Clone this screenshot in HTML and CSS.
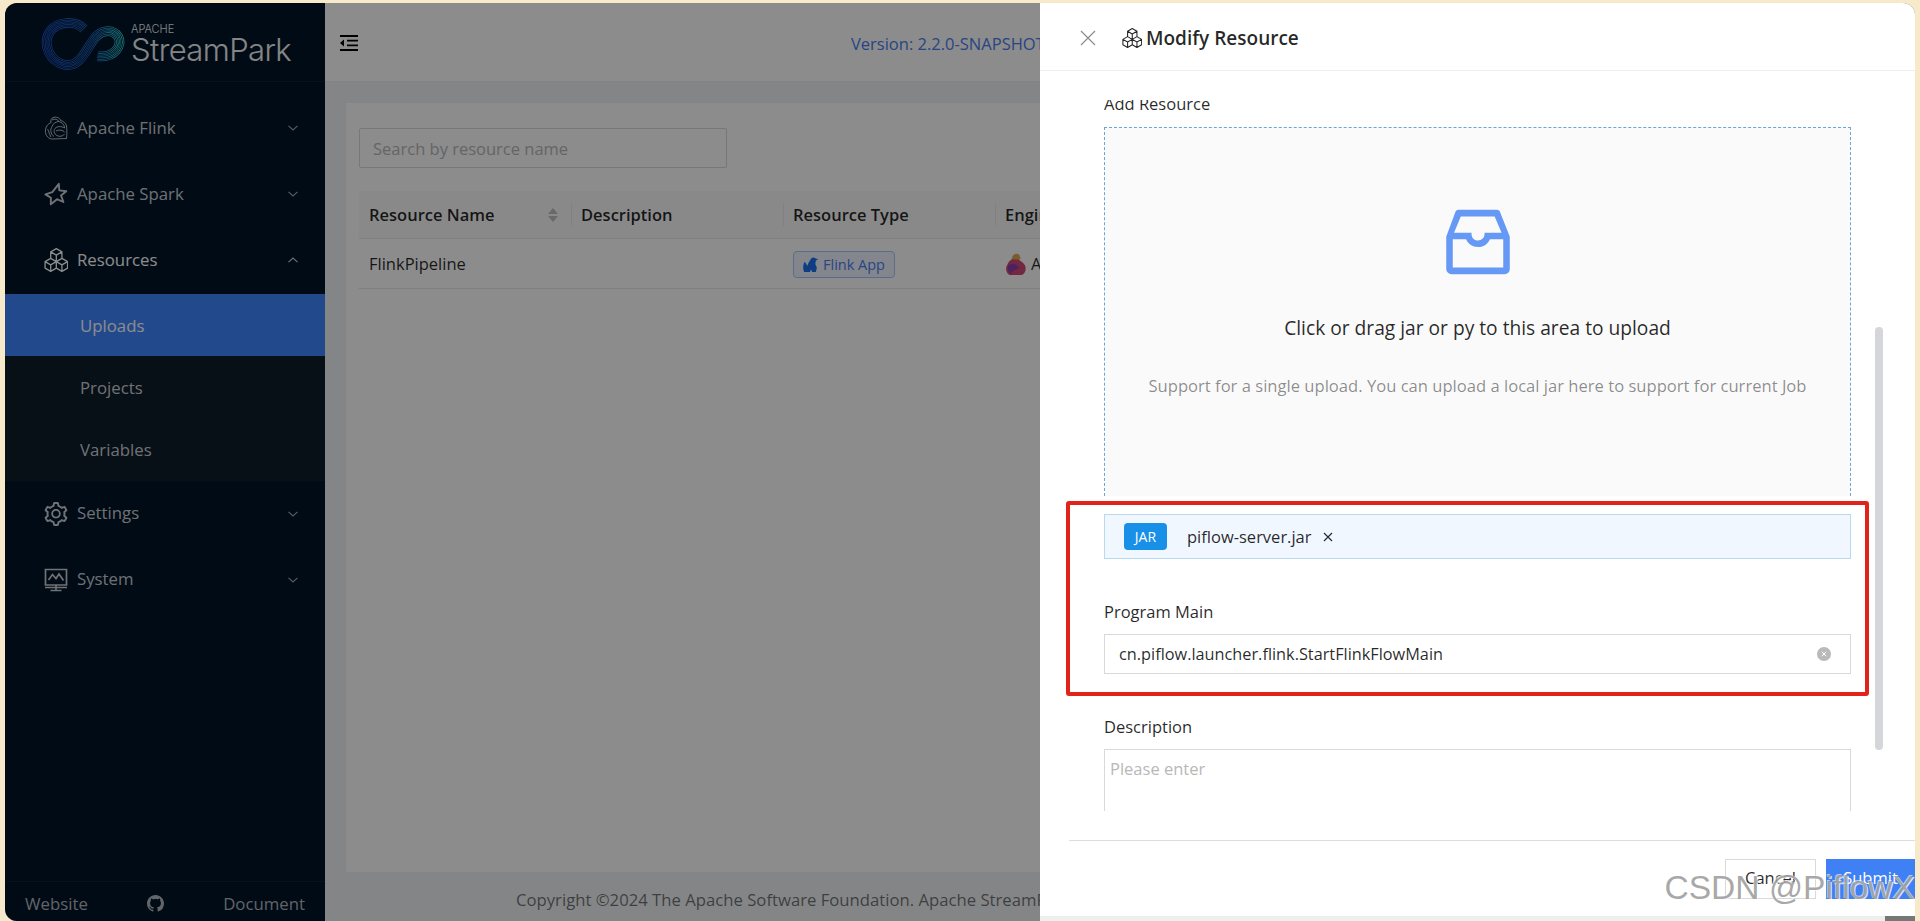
FILE: index.html
```html
<!DOCTYPE html>
<html lang="en">
<head>
    <meta charset="UTF-8">
    <title>StreamPark - Uploads</title>
    <link rel="stylesheet" href="styles.css">
</head>
<body>
    <svg class="defs" width="0" height="0">
        <defs>
            <symbol id="cubes" viewBox="2.5 1 18.5 18.5">
                <path d="M12 1.5L16.33 4V9L12 11.5L7.67 9V4ZM7.67 4L12 6.5L16.33 4M12 6.5V11.5M7.67 9L12 11.5V16.5L7.67 19L3.33 16.5V11.5ZM3.33 11.5L7.67 14L12 11.5M7.67 14V19M16.33 9L20.67 11.5V16.5L16.33 19L12 16.5V11.5ZM12 11.5L16.33 14L20.67 11.5M16.33 14V19" fill="none" stroke="currentColor" stroke-width="1" stroke-linejoin="round"/>
            </symbol>
            <symbol id="chevron" viewBox="0 0 12 8">
                <path d="M1.5 1.8L6 6L10.5 1.8" fill="none" stroke="currentColor" stroke-width="1.1"/>
            </symbol>
            <linearGradient id="logo-grad" x1="0" y1="0" x2="1" y2="0">
                <stop offset="0" stop-color="#2058d0"/>
                <stop offset="0.6" stop-color="#2168c8"/>
                <stop offset="1" stop-color="#35d0dc"/>
            </linearGradient>
            <path id="logo-line" d="M41 8C33 0 14-1 6 11C-2 24 6 42 22 45C36 47 42 32 50 20C57 9 70 7 76 16C81 25 72 38 55 36" fill="none"/>
        </defs>
    </svg>

    <div class="window">
        <aside class="sidebar">
            <div class="logo">
                <svg class="logo-mark" viewBox="-3 -3 86 54">
                    <use href="#logo-line" stroke="url(#logo-grad)" stroke-width="10"/>
                    <use href="#logo-line" stroke="#001529" stroke-width="8.400"/>
                    <use href="#logo-line" stroke="url(#logo-grad)" stroke-width="6.800"/>
                    <use href="#logo-line" stroke="#001529" stroke-width="5.200"/>
                    <use href="#logo-line" stroke="url(#logo-grad)" stroke-width="3.600"/>
                    <use href="#logo-line" stroke="#001529" stroke-width="2"/>
                    <use href="#logo-line" stroke="url(#logo-grad)" stroke-width="0.800"/>
                </svg>
                <div class="logo-text">
                    <span class="logo-apache">APACHE</span>
                    <span class="logo-name">StreamPark</span>
                </div>
            </div>

            <nav class="menu">
                <a class="menu-item">
                    <svg class="menu-icon" viewBox="0 0 24 24" fill="none" stroke="currentColor" stroke-width="0.9" stroke-linejoin="round">
                        <path d="M9 1.5C12 .5 16 1.5 16.5 4.5C19 5 22 7 22.5 10C23 14 23 19 22.5 22.5L8 23C3 22.5 1 18 1.5 13.5C2 10 4.5 7.5 7 6.5C6.5 4.5 7 2.5 9 1.5Z"/>
                        <path d="M8 4C10.500 2.500 14 3 14.500 5.500C11.500 6 9 7.500 8 10.500C6 13.500 6.500 18 10 20.500M14.500 5.500C18 6 20.500 9 20.500 12C17.500 10 13 10 11 12.500C9 15 10.500 19 14 20M3.500 13C5 15 5 18 7 21M12 15C15 13.500 19 14 21 16.500M14 20C17 21 19.500 19.500 20.500 18"/>
                    </svg>
                    <span>Apache Flink</span>
                    <svg class="menu-arrow"><use href="#chevron"/></svg>
                </a>
                <a class="menu-item">
                    <svg class="menu-icon" viewBox="0 0 24 24" fill="none" stroke="currentColor" stroke-width="1.9" stroke-linejoin="round">
                        <path d="M14.800 1.800L15.300 8.400L22.300 9.200L17 13.400L19.400 20L13 17.200L6.800 22.300L6.900 15.700L1.400 12.400L8.300 10.200Z"/>
                    </svg>
                    <span>Apache Spark</span>
                    <svg class="menu-arrow"><use href="#chevron"/></svg>
                </a>
                <a class="menu-item menu-open">
                    <svg class="menu-icon"><use href="#cubes"/></svg>
                    <span>Resources</span>
                    <svg class="menu-arrow arrow-up"><use href="#chevron"/></svg>
                </a>
                <div class="submenu">
                    <a class="submenu-item active">Uploads</a>
                    <a class="submenu-item">Projects</a>
                    <a class="submenu-item">Variables</a>
                </div>
                <a class="menu-item">
                    <svg class="menu-icon" viewBox="64 64 896 896" fill="currentColor">
                        <path d="M924.8 625.7l-65.5-56c3.1-19 4.7-38.4 4.7-57.8s-1.6-38.8-4.7-57.8l65.5-56a32.03 32.03 0 0 0 9.3-35.2l-.9-2.6a443.74 443.74 0 0 0-79.7-137.9l-1.8-2.1a32.12 32.12 0 0 0-35.1-9.5l-81.3 28.9c-30-24.6-63.5-44-99.7-57.6l-15.7-85a32.05 32.05 0 0 0-25.8-25.7l-2.7-.5c-52.1-9.4-106.9-9.4-159 0l-2.7.5a32.05 32.05 0 0 0-25.8 25.7l-15.8 85.4a351.86 351.86 0 0 0-99 57.4l-81.9-29.1a32 32 0 0 0-35.1 9.5l-1.8 2.1a446.02 446.02 0 0 0-79.7 137.9l-.9 2.6c-4.5 12.5-.8 26.5 9.3 35.2l66.3 56.6c-3.1 18.8-4.6 38-4.6 57.1 0 19.2 1.5 38.4 4.6 57.1L99 625.5a32.03 32.03 0 0 0-9.3 35.2l.9 2.6c18.1 50.4 44.9 96.9 79.7 137.9l1.8 2.1a32.12 32.12 0 0 0 35.1 9.5l81.9-29.1c29.8 24.5 63.1 43.9 99 57.4l15.8 85.4a32.05 32.05 0 0 0 25.8 25.7l2.7.5a449.4 449.4 0 0 0 159 0l2.7-.5a32.05 32.05 0 0 0 25.8-25.7l15.7-85a350 350 0 0 0 99.7-57.6l81.3 28.9a32 32 0 0 0 35.1-9.5l1.8-2.1c34.8-41.1 61.6-87.5 79.7-137.9l.9-2.6c4.5-12.3.8-26.3-9.3-35zM788.3 465.9c2.5 15.1 3.8 30.6 3.8 46.1s-1.3 31-3.8 46.1l-6.6 40.1 74.7 63.9a370.03 370.03 0 0 1-42.6 73.6L721 702.8l-31.4 25.8c-23.9 19.6-50.5 35-79.3 45.8l-38.1 14.3-17.9 97a377.5 377.5 0 0 1-85 0l-17.9-97.2-37.8-14.5c-28.5-10.8-55-26.2-78.7-45.7l-31.4-25.9-93.4 33.2c-17-22.9-31.2-47.6-42.6-73.6l75.5-64.5-6.5-40c-2.4-14.9-3.7-30.3-3.7-45.5 0-15.3 1.2-30.6 3.7-45.5l6.5-40-75.5-64.5c11.3-26.1 25.6-50.7 42.6-73.6l93.4 33.2 31.4-25.9c23.7-19.5 50.2-34.9 78.7-45.7l37.9-14.3 17.9-97.2c28.1-3.2 56.8-3.2 85 0l17.9 97 38.1 14.3c28.7 10.8 55.4 26.2 79.3 45.8l31.4 25.8 92.8-32.9c17 22.9 31.2 47.6 42.6 73.6L781.8 426l6.5 39.9zM512 326c-97.2 0-176 78.8-176 176s78.8 176 176 176 176-78.8 176-176-78.8-176-176-176zm79.2 255.2A111.6 111.6 0 0 1 512 614c-29.9 0-58-11.7-79.2-32.8A111.6 111.6 0 0 1 400 502c0-29.9 11.7-58 32.8-79.2C454 401.6 482.1 390 512 390c29.9 0 58 11.6 79.2 32.8A111.6 111.6 0 0 1 624 502c0 29.9-11.7 58-32.8 79.2z"/>
                    </svg>
                    <span>Settings</span>
                    <svg class="menu-arrow"><use href="#chevron"/></svg>
                </a>
                <a class="menu-item">
                    <svg class="menu-icon" viewBox="0 0 24 24" fill="none" stroke="currentColor" stroke-width="1.7">
                        <path d="M1.500 1.500H22.500V17H1.500ZM4.500 12L8.500 6.500L12 10.500L15 6L19.500 12.500M1 19.500H23M12 17V22.500M6.500 22.500H17.500"/>
                    </svg>
                    <span>System</span>
                    <svg class="menu-arrow"><use href="#chevron"/></svg>
                </a>
            </nav>

            <div class="sidebar-footer">
                <a>Website</a>
                <svg class="github" viewBox="0 0 16 16" fill="currentColor">
                    <path d="M8 0C3.58 0 0 3.58 0 8c0 3.54 2.29 6.53 5.47 7.59.4.07.55-.17.55-.38 0-.19-.01-.82-.01-1.49-2.01.37-2.53-.49-2.69-.94-.09-.23-.48-.94-.82-1.13-.28-.15-.68-.52-.01-.53.63-.01 1.08.58 1.23.82.72 1.21 1.87.87 2.33.66.07-.52.28-.87.51-1.07-1.78-.2-3.64-.89-3.64-3.95 0-.87.31-1.59.82-2.15-.08-.2-.36-1.02.08-2.12 0 0 .67-.21 2.2.82.64-.18 1.32-.27 2-.27.68 0 1.36.09 2 .27 1.53-1.04 2.2-.82 2.2-.82.44 1.1.16 1.92.08 2.12.51.56.82 1.27.82 2.15 0 3.07-1.87 3.75-3.65 3.95.29.25.54.73.54 1.48 0 1.07-.01 1.93-.01 2.2 0 .21.15.46.55.38A8.013 8.013 0 0016 8c0-4.42-3.58-8-8-8z"/>
                </svg>
                <a>Document</a>
            </div>
        </aside>

        <div class="main">
            <header class="topbar">
                <svg class="collapse" viewBox="0 0 18 16" fill="currentColor">
                    <path d="M0 0H18V2H0ZM0 14H18V16H0ZM7 4.700H18V6.500H7ZM7 9.500H18V11.300H7ZM4 4.500V11.500L0 8Z"/>
                </svg>
                <a class="version">Version: 2.2.0-SNAPSHOT</a>
            </header>

            <section class="content">
                <div class="card">
                    <input class="search" type="text" placeholder="Search by resource name">
                    <div class="table">
                        <div class="table-row table-head">
                            <div class="cell">
                                Resource Name
                                <span class="sorter"><i class="caret-up"></i><i class="caret-down"></i></span>
                            </div>
                            <div class="cell">Description</div>
                            <div class="cell">Resource Type</div>
                            <div class="cell">Engine Type</div>
                        </div>
                        <div class="table-row">
                            <div class="cell">FlinkPipeline</div>
                            <div class="cell"></div>
                            <div class="cell">
                                <span class="tag">
                                    <svg class="tag-icon" viewBox="0 0 16 16" fill="currentColor">
                                        <path d="M2 15C.5 12 1 8 2.500 5.500C3.500 7 4.500 8 5 9.500C5.500 7 7 5 8 3.500C8.500 2 10 1 11 1.500L12.500 2L15 3L13 4.500L12.500 7.500L14 11L13 15H9.500L8.500 12.500L7.500 15Z"/>
                                    </svg>
                                    Flink App
                                </span>
                            </div>
                            <div class="cell engine">
                                <svg class="engine-icon" viewBox="0 0 20 20">
                                    <path d="M9 1C12 0 14 2 14 5L12 8L6 7C6 4 7 2 9 1Z" fill="#e0a85a"/>
                                    <path d="M6 6C9 5 15 6 18 11C20 15 18 19 15 20H4C1 18 0 14 2 11C3 9 4 7 6 6Z" fill="#d14a78"/>
                                    <path d="M3 11C7 9 11 10 13 14C10 15 7 16 5 19C3 17 2 14 3 11Z" fill="#8a3fa8"/>
                                </svg>
                                Apache Flink
                            </div>
                        </div>
                    </div>
                </div>
            </section>

            <footer class="copyright">Copyright ©2024 The Apache Software Foundation. Apache StreamPark, StreamPark, and its feather logo are trademarks of The Apache Software Foundation.</footer>
        </div>

        <div class="mask"></div>

        <div class="drawer">
            <div class="drawer-header">
                <svg class="drawer-close" viewBox="0 0 16 16" fill="none" stroke="currentColor" stroke-width="1.200">
                    <path d="M1 1L15 15M15 1L1 15"/>
                </svg>
                <svg class="title-icon"><use href="#cubes"/></svg>
                <span class="drawer-title">Modify Resource</span>
            </div>

            <div class="drawer-body">
                <form class="form">
                    <label class="form-label">Add Resource</label>
                    <div class="dragger">
                        <svg class="inbox" viewBox="64 64 896 896" fill="currentColor">
                            <path d="M885.2 446.3l-.2-.8-112.2-285.1c-5-16.1-19.9-27.2-36.8-27.2H281.2c-17 0-32.1 11.3-36.9 27.6L139.4 443l-.3.7-.2.8c-1.3 4.9-1.7 9.9-1 14.8-.1 1.6-.2 3.2-.2 4.8V830a60.9 60.9 0 0 0 60.8 60.8h627.2c33.5 0 60.8-27.3 60.9-60.8V464.1c0-1.3 0-2.6-.1-3.7.4-4.9 0-9.6-1.3-14.1zm-295.8-43l-.3 15.7c-.8 44.9-31.8 75.1-77.1 75.1-22.1 0-41.1-7.1-54.8-20.6S436 441.2 435.6 419l-.3-15.7H229.5L309 210h399.2l81.7 193.3H589.4zm-375 76.8h157.3c24.3 57.1 76 90.8 140.4 90.8 33.7 0 65-9.4 90.3-27.2 22.2-15.6 39.5-37.4 50.7-63.6h156.5V814H214.4V480.1z"/>
                        </svg>
                        <p class="dragger-text">Click or drag jar or py to this area to upload</p>
                        <p class="dragger-hint">Support for a single upload. You can upload a local jar here to support for current Job</p>
                    </div>

                    <div class="file-row">
                        <span class="file-badge">JAR</span>
                        <span class="file-name">piflow-server.jar</span>
                        <svg class="file-remove" viewBox="0 0 10 10" fill="none" stroke="currentColor" stroke-width="1.100">
                            <path d="M1 1L9 9M9 1L1 9"/>
                        </svg>
                    </div>

                    <label class="form-label label-main">Program Main</label>
                    <div class="input-wrap">
                        <input class="form-input" type="text" value="cn.piflow.launcher.flink.StartFlinkFlowMain">
                        <svg class="clear" viewBox="0 0 14 14">
                            <circle cx="7" cy="7" r="7" fill="#b9b9b9"/>
                            <path d="M4.800 4.800L9.200 9.200M9.200 4.800L4.800 9.200" stroke="#fff" stroke-width="1"/>
                        </svg>
                    </div>

                    <label class="form-label label-desc">Description</label>
                    <textarea class="form-textarea" placeholder="Please enter"></textarea>
                </form>
                <div class="scroll-thumb"></div>
            </div>

            <div class="drawer-footer">
                <button class="btn" type="button">Cancel</button>
                <button class="btn btn-primary" type="button">Submit</button>
            </div>
        </div>

        <div class="annotation"></div>
    </div>

    <div class="bottom-strip"></div>
    <div class="watermark">CSDN @PiflowX</div>
</body>
</html>
```
FILE: styles.css
```css
* {
    box-sizing: border-box;
}

html, body {
    height: 100%;
}

body {
    margin: 0;
    padding: 3px 5px 0;
    overflow: hidden;
    position: relative;
    background: #f6eaca;
    color: rgba(0, 0, 0, 0.85);
    font-family: "Open Sans", "Noto Sans", sans-serif;
    font-size: 16.5px;
}

.defs {
    position: absolute;
}

.window {
    position: relative;
    display: flex;
    height: 918px;
    overflow: hidden;
    border-radius: 12px 12px 0 12px;
}

/* sidebar */
.sidebar {
    display: flex;
    flex-direction: column;
    flex: none;
    width: 320px;
    background: #001529;
    color: rgba(255, 255, 255, 0.8);
    font-size: 16.8px;
}

.logo {
    display: flex;
    align-items: center;
    flex: none;
    height: 79px;
    padding: 0 0 0 36px;
    border-bottom: 1px solid #0b2236;
}

.logo-mark {
    width: 84px;
    height: 53px;
    margin-top: 4px;
}

.logo-text {
    display: flex;
    flex-direction: column;
    margin: 3px 0 0 6px;
    color: #fff;
    font-family: "Inter", sans-serif;
    font-weight: 300;
    opacity: 0.95;
}

.logo-apache {
    font-size: 11px;
    line-height: 12px;
}

.logo-name {
    font-size: 31px;
    line-height: 30px;
    letter-spacing: -0.6px;
}

.menu {
    padding-top: 13px;
}

.menu-item {
    display: flex;
    align-items: center;
    height: 66px;
    padding: 0 26px 0 39px;
}

.menu-item span {
    flex: 1;
    margin-left: 9px;
    padding-bottom: 2px;
}

.menu-open {
    color: #fff;
}

.menu-icon {
    width: 24px;
    height: 24px;
    flex: none;
}

.menu-arrow {
    width: 12px;
    height: 8px;
    flex: none;
    opacity: 0.8;
}

.arrow-up {
    transform: rotate(180deg);
}

.submenu {
    margin-top: 1px;
    background: #0d1c2b;
}

.submenu-item {
    display: flex;
    align-items: center;
    height: 62.33px;
    padding-left: 75px;
}

.submenu-item.active {
    background: #3f86ff;
    color: #fff;
}

.sidebar-footer {
    display: flex;
    align-items: center;
    justify-content: space-between;
    flex: none;
    margin-top: auto;
    height: 40px;
    padding: 3px 20px 0;
    border-top: 1px solid #0b2236;
    color: rgba(255, 255, 255, 0.7);
}

.github {
    width: 17px;
    height: 17px;
}

/* main area */
.main {
    display: flex;
    flex-direction: column;
    flex: 1;
    min-width: 0;
    background: #f0f2f5;
}

.topbar {
    display: flex;
    align-items: center;
    flex: none;
    height: 79px;
    padding: 2px 0 0 15px;
    background: #fff;
    border-bottom: 1px solid #eee;
    white-space: nowrap;
}

.collapse {
    width: 18px;
    height: 16px;
    color: #000;
}

.version {
    margin-left: 493px;
    color: #4a7ef0;
}

.content {
    flex: none;
    height: 790px;
    padding: 21px 0 0 21px;
}

.card {
    height: 769px;
    padding: 25px 0 0 13px;
    background: #fff;
}

.search {
    display: block;
    width: 368px;
    height: 40px;
    padding: 0 13px;
    border: 1px solid #d9d9d9;
    border-radius: 2px;
    background: #fff;
    font: inherit;
}

.search::placeholder, .form-textarea::placeholder {
    color: #b8b8b8;
}

.table {
    margin-top: 23px;
}

.table-row {
    display: grid;
    grid-template-columns: 212px 212px 212px 212px;
    align-items: center;
    height: 50px;
    border-bottom: 1px solid #e8e8e8;
    white-space: nowrap;
}

.table-head {
    height: 48px;
    background: #fafafa;
    font-weight: 600;
}

.cell {
    display: flex;
    align-items: center;
    padding-left: 10px;
    position: relative;
}

.table-head .cell + .cell::before {
    content: "";
    position: absolute;
    left: 0;
    top: 0;
    bottom: 0;
    width: 1px;
    background: #ececec;
}

.sorter {
    display: flex;
    flex-direction: column;
    gap: 2px;
    margin-left: auto;
    margin-right: 13px;
}

.caret-up, .caret-down {
    display: block;
    border-left: 5px solid transparent;
    border-right: 5px solid transparent;
}

.caret-up {
    border-bottom: 6px solid #bfbfbf;
}

.caret-down {
    border-top: 6px solid #bfbfbf;
}

.tag {
    display: inline-flex;
    align-items: center;
    gap: 4px;
    height: 27px;
    margin-top: 2px;
    padding: 0 9px 0 8px;
    border: 1px solid #a8c5f5;
    border-radius: 4px;
    background: #eef5ff;
    color: #4a7ef0;
    font-size: 14.5px;
}

.tag-icon {
    width: 17px;
    height: 17px;
    color: #1b6ff0;
}

.engine-icon {
    width: 22px;
    height: 22px;
    margin-right: 4px;
}

.copyright {
    flex: none;
    height: 49px;
    padding: 4px 0 0 191px;
    line-height: 48px;
    font-size: 16.7px;
    white-space: nowrap;
    color: rgba(0, 0, 0, 0.55);
}

/* dark layer under the drawer */
.mask {
    position: absolute;
    top: 0;
    left: 0;
    right: 0;
    bottom: 0;
    background: rgba(0, 0, 0, 0.45);
}

/* drawer */
.drawer {
    position: absolute;
    top: 0;
    right: 0;
    bottom: 5px;
    display: flex;
    flex-direction: column;
    width: 875px;
    background: #fff;
    border-radius: 0 12px 0 0;
}

.drawer-header {
    display: flex;
    align-items: center;
    flex: none;
    height: 68px;
    padding: 2px 0 0 40px;
    border-bottom: 1px solid #eee;
}

.drawer-close {
    width: 16px;
    height: 16px;
    color: #8c8c8c;
}

.title-icon {
    width: 20px;
    height: 20px;
    margin-left: 26px;
}

.drawer-title {
    margin-left: 4px;
    font-size: 19px;
    font-weight: 600;
}

.drawer-body {
    position: relative;
    flex: none;
    height: 711px;
    margin: 29px 0 29px;
    overflow: hidden;
}

.form {
    margin-top: -8px;
    padding: 0 64px;
}

.form-label {
    display: block;
    height: 24px;
    line-height: 24px;
}

.dragger {
    display: flex;
    flex-direction: column;
    align-items: center;
    height: 369px;
    margin-top: 11px;
    padding-top: 76px;
    border: 1px dashed #6aa7d8;
    border-bottom: none;
    background: #fafafa;
}

.inbox {
    width: 76px;
    height: 76px;
    color: #6699f5;
}

.dragger-text {
    margin: 34px 0 0;
    font-size: 19.2px;
    line-height: 28px;
}

.dragger-hint {
    margin: 30px 0 0;
    font-size: 16.6px;
    line-height: 28px;
    color: rgba(0, 0, 0, 0.45);
}

.file-row {
    display: flex;
    align-items: center;
    height: 45px;
    margin-top: 18px;
    padding-left: 19px;
    border: 1px solid #b9d9ee;
    background: #f0f7ff;
}

.file-badge {
    width: 43px;
    height: 27px;
    border-radius: 4px;
    background: #1890e8;
    color: #fff;
    font-size: 14px;
    line-height: 27px;
    text-align: center;
}

.file-name {
    margin-left: 20px;
}

.file-remove {
    width: 10px;
    height: 10px;
    margin-left: 11px;
}

.label-main {
    margin-top: 41px;
}

.input-wrap {
    position: relative;
    margin-top: 10px;
}

.form-input {
    display: block;
    width: 100%;
    height: 40px;
    padding: 0 14px;
    border: 1px solid #d9d9d9;
    background: #fff;
    color: inherit;
    font: inherit;
    font-size: 16.3px;
}

.clear {
    position: absolute;
    right: 20px;
    top: 13px;
    width: 14px;
    height: 14px;
}

.label-desc {
    margin-top: 41px;
}

.form-textarea {
    display: block;
    width: 100%;
    height: 120px;
    margin-top: 10px;
    padding: 7px 5px;
    border: 1px solid #d9d9d9;
    font: inherit;
    resize: none;
}

.scroll-thumb {
    position: absolute;
    top: 227px;
    right: 32px;
    width: 8px;
    height: 423px;
    border-radius: 4px;
    background: #d5d6d9;
}

.drawer-footer {
    display: flex;
    justify-content: flex-end;
    gap: 10px;
    flex: none;
    height: 75px;
    margin-left: 29px;
    padding-top: 18px;
    border-top: 1px solid #ddd;
}

.btn {
    width: 91px;
    height: 40px;
    padding: 0 0 4px;
    border: 1px solid #d9d9d9;
    border-radius: 0;
    background: #fff;
    color: inherit;
    font: inherit;
}

.btn-primary {
    width: 89px;
    border-color: #4080f5;
    background: #4080f5;
    color: #fff;
}

/* red box drawn on the screenshot */
.annotation {
    position: absolute;
    top: 498px;
    left: 1061px;
    width: 803px;
    height: 195px;
    border: 4px solid #e2231a;
    border-radius: 3px;
}

.bottom-strip {
    position: absolute;
    left: 1040px;
    right: 5px;
    bottom: 0;
    height: 5px;
    background: linear-gradient(90deg, #eeeeee 96.6%, #777 96.6%);
}

.watermark {
    position: absolute;
    right: 5px;
    bottom: 16px;
    color: rgba(140, 140, 140, 0.75);
    font-family: "Liberation Sans", sans-serif;
    font-size: 33.6px;
    line-height: 34px;
    text-shadow: 1px 1px 0 rgba(255, 255, 255, 0.8), -1px -1px 0 rgba(255, 255, 255, 0.6);
    white-space: nowrap;
}
```
